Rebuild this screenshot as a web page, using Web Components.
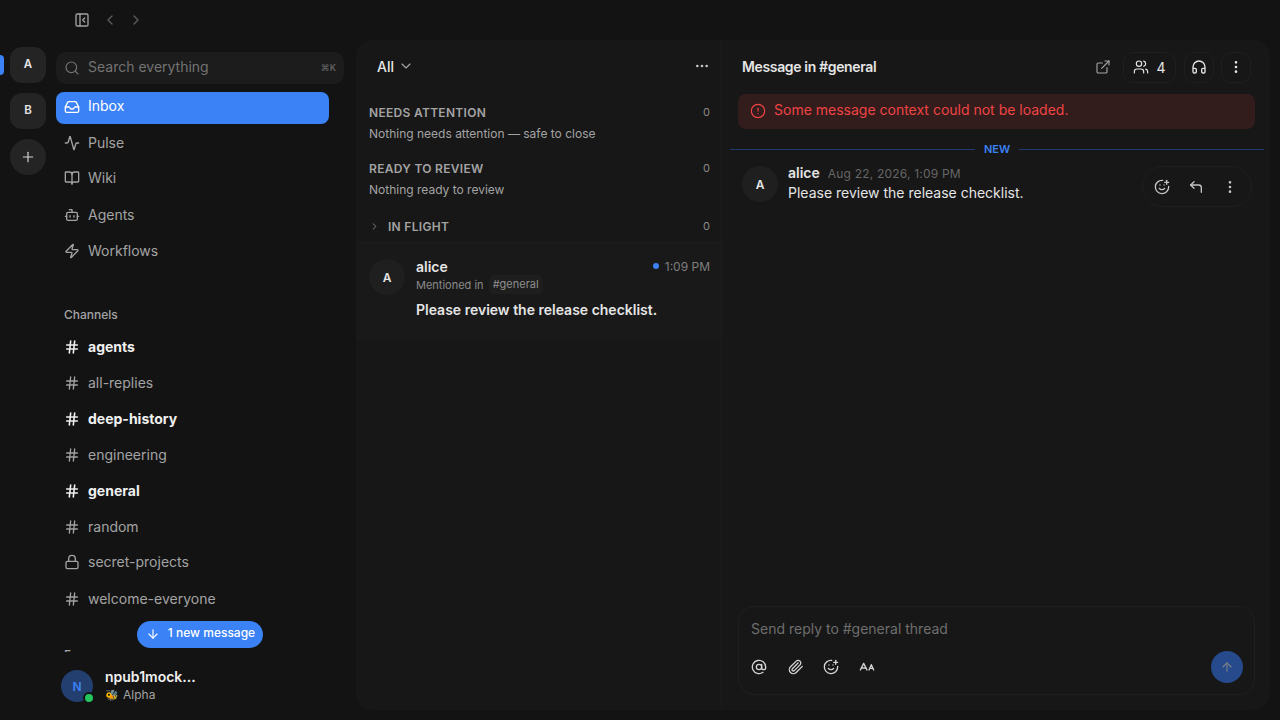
<!DOCTYPE html>
<html lang="en">
<head>
<meta charset="utf-8">
<title>Inbox</title>
<style>
  html, body { margin: 0; height: 100%; background: #131313; overflow: hidden; }
  body { font-family: Inter, "Noto Sans", sans-serif; color: #e5e5e5; }
</style>
</head>
<body>
<app-shell></app-shell>
<script>
const ICONS = {
  panel: '<rect x="3" y="3" width="18" height="18" rx="2"/><path d="M9 3v18"/><path d="m16 15-3-3 3-3"/>',
  left: '<path d="m15 18-6-6 6-6"/>',
  right: '<path d="m9 18 6-6-6-6"/>',
  down: '<path d="m6 9 6 6 6-6"/>',
  search: '<circle cx="11" cy="11" r="8"/><path d="m21 21-4.3-4.3"/>',
  inbox: '<path d="M22 12h-6l-2 3h-4l-2-3H2"/><path d="M5.45 5.11 2 12v6a2 2 0 0 0 2 2h16a2 2 0 0 0 2-2v-6l-3.45-6.89A2 2 0 0 0 16.76 4H7.24a2 2 0 0 0-1.79 1.11z"/>',
  pulse: '<path d="M22 12h-2.48a2 2 0 0 0-1.93 1.46l-2.35 8.36a.25.25 0 0 1-.48 0L9.24 2.18a.25.25 0 0 0-.48 0l-2.35 8.36A2 2 0 0 1 4.49 12H2"/>',
  book: '<path d="M12 7v14"/><path d="M3 18a1 1 0 0 1-1-1V4a1 1 0 0 1 1-1h5a4 4 0 0 1 4 4 4 4 0 0 1 4-4h5a1 1 0 0 1 1 1v13a1 1 0 0 1-1 1h-6a3 3 0 0 0-3 3 3 3 0 0 0-3-3z"/>',
  bot: '<path d="M12 8V4H8"/><rect x="4" y="8" width="16" height="12" rx="2"/><path d="M2 14h2"/><path d="M20 14h2"/><path d="M15 13v2"/><path d="M9 13v2"/>',
  zap: '<path d="M4 14a1 1 0 0 1-.78-1.63l9.9-10.2a.5.5 0 0 1 .86.46l-1.92 6.02A1 1 0 0 0 13 10h7a1 1 0 0 1 .78 1.63l-9.9 10.2a.5.5 0 0 1-.86-.46l1.92-6.02A1 1 0 0 0 11 14z"/>',
  hash: '<path d="M4 9h16"/><path d="M4 15h16"/><path d="M10 3 8 21"/><path d="M16 3l-2 18"/>',
  lock: '<rect x="3" y="11" width="18" height="11" rx="2"/><path d="M7 11V7a5 5 0 0 1 10 0v4"/>',
  plus: '<path d="M5 12h14"/><path d="M12 5v14"/>',
  arrowdown: '<path d="M12 5v14"/><path d="m19 12-7 7-7-7"/>',
  arrowup: '<path d="m5 12 7-7 7 7"/><path d="M12 19V5"/>',
  external: '<path d="M15 3h6v6"/><path d="M10 14 21 3"/><path d="M18 13v6a2 2 0 0 1-2 2H5a2 2 0 0 1-2-2V8a2 2 0 0 1 2-2h6"/>',
  users: '<path d="M16 21v-2a4 4 0 0 0-4-4H6a4 4 0 0 0-4 4v2"/><circle cx="9" cy="7" r="4"/><path d="M22 21v-2a4 4 0 0 0-3-3.87"/><path d="M16 3.13a4 4 0 0 1 0 7.75"/>',
  headphones: '<path d="M3 14h3a2 2 0 0 1 2 2v3a2 2 0 0 1-2 2H5a2 2 0 0 1-2-2v-7a9 9 0 0 1 18 0v7a2 2 0 0 1-2 2h-1a2 2 0 0 1-2-2v-3a2 2 0 0 1 2-2h3"/>',
  vdots: '<circle cx="12" cy="12" r="1"/><circle cx="12" cy="5" r="1"/><circle cx="12" cy="19" r="1"/>',
  hdots: '<circle cx="12" cy="12" r="1"/><circle cx="19" cy="12" r="1"/><circle cx="5" cy="12" r="1"/>',
  alert: '<circle cx="12" cy="12" r="10"/><path d="M12 8v4"/><path d="M12 16h.01"/>',
  smile: '<path d="M22 11v1a10 10 0 1 1-9-10"/><path d="M8 14s1.5 2 4 2 4-2 4-2"/><path d="M9 9h.01"/><path d="M15 9h.01"/><path d="M16 5h6"/><path d="M19 2v6"/>',
  reply: '<path d="M9 14 4 9l5-5"/><path d="M20 20v-7a4 4 0 0 0-4-4H4"/>',
  at: '<circle cx="12" cy="12" r="4"/><path d="M16 8v5a3 3 0 0 0 6 0v-1a10 10 0 1 0-4 8"/>',
  clip: '<path d="m21.44 11.05-9.19 9.19a6 6 0 0 1-8.49-8.49l8.57-8.57A4 4 0 1 1 18 8.84l-8.59 8.57a2 2 0 0 1-2.83-2.83l8.49-8.48"/>',
  size: '<path d="M2 16.5 7 6.5l5 10"/><path d="M3.8 13.5h6.4"/><path d="M15 16.5l3.5-8 3.5 8"/><path d="M16.2 14h4.6"/>'
};

class UiIcon extends HTMLElement {
  connectedCallback() {
    const size = this.getAttribute('size') || 16;
    const sw = this.getAttribute('stroke') || 2;
    this.attachShadow({ mode: 'open' });
    this.shadowRoot.innerHTML = `
      <style>:host { display: inline-flex; flex: none; width: ${size}px; height: ${size}px; } svg { display: block; }</style>
      <svg width="${size}" height="${size}" viewBox="0 0 24 24" fill="none" stroke="currentColor" stroke-width="${sw}" stroke-linecap="round" stroke-linejoin="round">${ICONS[this.getAttribute('name')] || ''}</svg>`;
  }
}

class TopBar extends HTMLElement {
  connectedCallback() {
    this.attachShadow({ mode: 'open' });
    this.shadowRoot.innerHTML = `
      <style>
        :host { display: flex; align-items: center; height: 40px; padding-left: 74px; gap: 10px; color: #5c5c5c; }
        .panel { color: #a3a3a3; margin-right: 2px; }
      </style>
      <ui-icon class="panel" name="panel" size="16"></ui-icon>
      <ui-icon name="left" size="16"></ui-icon>
      <ui-icon name="right" size="16"></ui-icon>`;
  }
}

class ServerRail extends HTMLElement {
  connectedCallback() {
    this.attachShadow({ mode: 'open' });
    this.shadowRoot.innerHTML = `
      <style>
        :host { display: flex; flex-direction: column; align-items: center; width: 56px; flex: none; padding-top: 7px; gap: 10px; position: relative; box-sizing: border-box; }
        .srv { width: 36px; height: 36px; padding-bottom: 2px; box-sizing: border-box; border-radius: 12px; background: #242424; display: flex; align-items: center; justify-content: center; font: 600 11.5px Inter, sans-serif; color: #e5e5e5; }
        .add { border-radius: 50%; color: #d4d4d4; padding-bottom: 0; }
        .mark { position: absolute; left: 0; top: 15px; width: 4px; height: 20px; background: #3b82f6; border-radius: 0 4px 4px 0; }
      </style>
      <span class="mark"></span>
      <div class="srv">A</div>
      <div class="srv">B</div>
      <div class="srv add"><ui-icon name="plus" size="16" stroke="1.75"></ui-icon></div>`;
  }
}

class NavItem extends HTMLElement {
  connectedCallback() {
    const icon = this.getAttribute('icon');
    this.attachShadow({ mode: 'open' });
    this.shadowRoot.innerHTML = `
      <style>
        :host { display: flex; align-items: center; height: 36px; gap: 8px; padding-left: 8px; margin-right: 15px; box-sizing: border-box; font-size: 14px; color: #a3a3a3; border-radius: 8px; }
        :host([active]) { height: 32px; background: #3b82f6; color: #fff; margin-bottom: 1px; padding-bottom: 3px; }
        :host([unread]) { color: #f0f0f0; font-weight: 700; }
        .t { margin-bottom: 2px; }
      </style>
      <ui-icon name="${icon}" size="16" stroke="${this.hasAttribute('unread') ? 2.4 : 2}"></ui-icon>
      <span class="t"><slot></slot></span>`;
  }
}

class SideBar extends HTMLElement {
  connectedCallback() {
    this.attachShadow({ mode: 'open' });
    this.shadowRoot.innerHTML = `
      <style>
        :host { display: flex; flex-direction: column; width: 288px; flex: none; position: relative; font-size: 14px; }
        .search { display: flex; align-items: center; gap: 8px; height: 32px; margin-top: 12px; padding: 0 8px; background: #1c1c1c; border-radius: 10px; color: #737373; flex: none; }
        .search span { flex: 1; margin-bottom: 3px; }
        .search kbd { font: 600 9px Inter, sans-serif; color: #5f5f5f; margin-bottom: 2px; }
        .scroll { flex: 1; overflow: hidden; padding-top: 8px; min-height: 0; }
        .head { font-size: 12px; font-weight: 500; color: #a3a3a3; padding-left: 8px; line-height: 15px; }
        .channels { margin-top: 38px; }
        .list { margin-top: 7px; }
        .pill { position: absolute; left: 81px; top: 581px; height: 27px; width: 126px; box-sizing: border-box; background: #3b82f6; color: #fff; border-radius: 14px; display: flex; align-items: center; justify-content: center; gap: 8px; padding: 0 0 1px 1px; font-size: 12px; font-weight: 500; }
        .pill span { margin-bottom: 3px; }
        .me { flex: none; height: 68px; display: flex; align-items: center; gap: 12px; padding-left: 5px; box-sizing: border-box; }
        .avatar { position: relative; width: 32px; height: 32px; border-radius: 50%; background: #233f70; color: #3b82f6; font-size: 12px; font-weight: 600; display: flex; align-items: center; justify-content: center; }
        .dot { position: absolute; right: -2px; bottom: -2px; width: 8px; height: 8px; background: #22c55e; border-radius: 50%; border: 2px solid #131313; }
        .name { font-size: 14px; font-weight: 600; color: #f0f0f0; line-height: 18px; }
        .status { font-size: 12px; color: #a3a3a3; line-height: 18px; display: flex; gap: 4px; }
        .status i { font-style: normal; font-size: 11px; }
      </style>
      <div class="search"><ui-icon name="search" size="16" stroke="1.75"></ui-icon><span>Search everything</span><kbd>⌘K</kbd></div>
      <div class="scroll">
        <nav-item icon="inbox" active>Inbox</nav-item>
        <nav-item icon="pulse">Pulse</nav-item>
        <nav-item icon="book" style="margin-top:-1px">Wiki</nav-item>
        <nav-item icon="bot" style="margin-top:1px">Agents</nav-item>
        <nav-item icon="zap">Workflows</nav-item>
        <div class="head channels">Channels</div>
        <div class="list">
          <nav-item icon="hash" unread>agents</nav-item>
          <nav-item icon="hash">all-replies</nav-item>
          <nav-item icon="hash" unread>deep-history</nav-item>
          <nav-item icon="hash">engineering</nav-item>
          <nav-item icon="hash" unread>general</nav-item>
          <nav-item icon="hash">random</nav-item>
          <nav-item icon="lock" style="margin-top:-1px">secret-projects</nav-item>
          <nav-item icon="hash" style="margin-top:1px">welcome-everyone</nav-item>
        </div>
        <div class="head" style="margin-top:30px">Forums</div>
      </div>
      <div class="pill"><ui-icon name="arrowdown" size="14"></ui-icon><span>1 new message</span></div>
      <div class="me">
        <div class="avatar">N<span class="dot"></span></div>
        <div>
          <div class="name">npub1mock...</div>
          <div class="status"><i>🐝</i>Alpha</div>
        </div>
      </div>`;
  }
}

class InboxSection extends HTMLElement {
  connectedCallback() {
    const chevron = this.hasAttribute('collapsed');
    this.attachShadow({ mode: 'open' });
    this.shadowRoot.innerHTML = `
      <style>
        :host { display: block; padding: 0 11px 0 13px; }
        .row { display: flex; align-items: center; height: 16px; gap: 8px; }
        .title { flex: 1; font-size: 12px; font-weight: 600; color: #a3a3a3; letter-spacing: .025em; }
        .count { font-size: 11px; color: #8a8a8a; }
        .empty { font-size: 12px; color: #a3a3a3; line-height: 16px; margin-top: 6px; }
        ui-icon { color: #8a8a8a; }
      </style>
      <div class="row">${chevron ? '<ui-icon name="right" size="11"></ui-icon>' : ''}<span class="title">${this.getAttribute('title')}</span><span class="count">0</span></div>
      ${chevron ? '' : `<div class="empty"><slot></slot></div>`}`;
  }
}

class InboxPanel extends HTMLElement {
  connectedCallback() {
    this.attachShadow({ mode: 'open' });
    this.shadowRoot.innerHTML = `
      <style>
        :host { display: flex; flex-direction: column; width: 366px; flex: none; border-right: 1px solid #1c1c1c; box-sizing: border-box; }
        header { display: flex; align-items: center; height: 52px; padding: 0 11px 0 21px; flex: none; color: #e5e5e5; font-size: 14px; font-weight: 500; gap: 4px; }
        header .more { margin-left: auto; color: #c4c4c4; }
        header ui-icon:first-of-type { color: #a3a3a3; }
        .sections { display: flex; flex-direction: column; padding-top: 12px; }
        .item { display: flex; gap: 11px; margin-top: 8px; padding: 16px 11px 0 13px; height: 98px; box-sizing: border-box; background: #191919; border-top: 1px solid #1c1c1c; }
        .av { width: 36px; height: 36px; border-radius: 50%; background: #1f1f1f; display: flex; align-items: center; justify-content: center; font-size: 12px; font-weight: 600; color: #e5e5e5; flex: none; }
        .body { flex: 1; min-width: 0; }
        .top { display: flex; align-items: center; height: 16px; margin-top: -1px; }
        .who { font-size: 14px; font-weight: 600; color: #e5e5e5; flex: 1; }
        .dot { width: 6px; height: 6px; border-radius: 50%; background: #3b82f6; margin-right: 6px; }
        .time { font-size: 12px; color: #7f7f7f; }
        .ctx { display: flex; align-items: center; font-size: 11px; color: #8a8a8a; margin-top: 1px; height: 19px; gap: 5px; }
        .tag { background: #1e1e1e; border-radius: 5px; padding: 2px 4px; line-height: 15px; color: #8f8f8f; }
        .msg { font-size: 14px; font-weight: 600; color: #e5e5e5; margin-top: 6px; line-height: 20px; }
      </style>
      <header><span>All</span><ui-icon name="down" size="16" stroke="1.75"></ui-icon><ui-icon class="more" name="hdots" size="16"></ui-icon></header>
      <div class="sections">
        <inbox-section title="NEEDS ATTENTION">Nothing needs attention — safe to close</inbox-section>
        <inbox-section title="READY TO REVIEW" style="margin-top:18px">Nothing ready to review</inbox-section>
        <inbox-section title="IN FLIGHT" collapsed style="margin-top:20px"></inbox-section>
      </div>
      <div class="item">
        <div class="av">A</div>
        <div class="body">
          <div class="top"><span class="who">alice</span><span class="dot"></span><span class="time">1:09 PM</span></div>
          <div class="ctx"><span>Mentioned in</span><span class="tag">#general</span></div>
          <div class="msg">Please review the release checklist.</div>
        </div>
      </div>`;
  }
}

class ThreadPanel extends HTMLElement {
  connectedCallback() {
    this.attachShadow({ mode: 'open' });
    this.shadowRoot.innerHTML = `
      <style>
        :host { display: flex; flex-direction: column; flex: 1; min-width: 0; }
        header { display: flex; align-items: center; height: 54px; padding: 0 19px 0 20px; flex: none; gap: 7.5px; box-sizing: border-box; }
        h1 { flex: 1; margin: 0 0 2px; font-size: 14px; font-weight: 600; letter-spacing: -.025em; color: #e5e5e5; }
        .btn { height: 31px; min-width: 30px; box-sizing: border-box; border: 1px solid #1f1f1f; border-radius: 10px; display: flex; align-items: center; justify-content: center; gap: 7px; color: #e5e5e5; font-size: 14px; font-weight: 400; }
        .people { width: 53px; }
        .plain { border-color: transparent; color: #a3a3a3; margin-right: -2.5px; }
        .error { display: flex; align-items: center; gap: 8px; height: 35px; margin: 0 15px 0 16px; padding: 0 12px 2px; box-sizing: border-box; background: #331c1c; border-radius: 8px; color: #ef4444; font-size: 14px; flex: none; }
        .error span { margin-bottom: 2px; }
        .new { display: flex; align-items: center; margin: 13px 6px 0 8px; gap: 9px; color: #3b82f6; font-size: 11px; font-weight: 600; height: 14px; }
        .new::before, .new::after { content: ""; flex: 1; height: 1px; background: #1e3a70; }
        .msg { display: flex; gap: 10px; margin-top: 10px; padding: 0 20px; position: relative; flex: none; }
        .av { width: 36px; height: 36px; border-radius: 50%; background: #1f1f1f; display: flex; align-items: center; justify-content: center; font-size: 12px; font-weight: 600; color: #e5e5e5; flex: none; }
        .meta { display: flex; align-items: baseline; gap: 8px; line-height: 18px; margin-top: -2px; }
        .who { font-size: 14px; font-weight: 600; color: #e5e5e5; }
        .when { font-size: 12px; letter-spacing: .2px; color: #666; }
        .txt { font-size: 14px; color: #e5e5e5; line-height: 20px; }
        .actions { position: absolute; right: 18px; top: 0; height: 41px; width: 110px; box-sizing: border-box; border: 1px solid #1f1f1f; border-radius: 21px; padding-right: 2px; display: flex; align-items: center; justify-content: center; gap: 18px; color: #c4c4c4; background: #171717; }
        .spacer { flex: 1; }
        .composer { margin: 0 15px 15px 16px; height: 89px; box-sizing: border-box; border: 1px solid #1f1f1f; border-radius: 16px; padding: 0 12px; display: flex; flex-direction: column; flex: none; }
        .ph { font-size: 14px; color: #6e6e6e; height: 42px; display: flex; align-items: center; }
        .tools { display: flex; align-items: center; gap: 20px; color: #d4d4d4; height: 32px; margin-top: 2px; }
        .send { margin-left: auto; width: 32px; height: 32px; border-radius: 50%; background: #264a8c; color: #7a7f88; display: flex; align-items: center; justify-content: center; margin-right: -1px; }
      </style>
      <header>
        <h1>Message in #general</h1>
        <div class="btn plain"><ui-icon name="external" size="16" stroke="1.75"></ui-icon></div>
        <div class="btn people"><ui-icon name="users" size="16" stroke="1.75"></ui-icon>4</div>
        <div class="btn"><ui-icon name="headphones" size="16"></ui-icon></div>
        <div class="btn"><ui-icon name="vdots" size="16"></ui-icon></div>
      </header>
      <div class="error"><ui-icon name="alert" size="16" stroke="1.75"></ui-icon><span>Some message context could not be loaded.</span></div>
      <div class="new">NEW</div>
      <div class="msg">
        <div class="av">A</div>
        <div>
          <div class="meta"><span class="who">alice</span><span class="when">Aug 22, 2026, 1:09 PM</span></div>
          <div class="txt">Please review the release checklist.</div>
        </div>
        <div class="actions"><ui-icon name="smile" size="16"></ui-icon><ui-icon name="reply" size="16"></ui-icon><ui-icon name="vdots" size="16"></ui-icon></div>
      </div>
      <div class="spacer"></div>
      <div class="composer">
        <div class="ph">Send reply to #general thread</div>
        <div class="tools">
          <ui-icon name="at" size="16"></ui-icon>
          <ui-icon name="clip" size="16" style="margin-left:1px"></ui-icon>
          <ui-icon name="smile" size="16" style="margin-left:-1px"></ui-icon>
          <ui-icon name="size" size="16"></ui-icon>
          <div class="send"><ui-icon name="arrowup" size="14"></ui-icon></div>
        </div>
      </div>`;
  }
}

class AppShell extends HTMLElement {
  connectedCallback() {
    this.attachShadow({ mode: 'open' });
    this.shadowRoot.innerHTML = `
      <style>
        :host { display: flex; flex-direction: column; width: 1280px; height: 720px; }
        .cols { display: flex; flex: 1; min-height: 0; }
        .main { display: flex; flex: 1; min-width: 0; margin: 0 10px 10px 12px; background: #171717; border-radius: 16px; overflow: hidden; }
      </style>
      <top-bar></top-bar>
      <div class="cols">
        <server-rail></server-rail>
        <side-bar></side-bar>
        <div class="main"><inbox-panel></inbox-panel><thread-panel></thread-panel></div>
      </div>`;
  }
}

customElements.define('ui-icon', UiIcon);
customElements.define('top-bar', TopBar);
customElements.define('server-rail', ServerRail);
customElements.define('nav-item', NavItem);
customElements.define('side-bar', SideBar);
customElements.define('inbox-section', InboxSection);
customElements.define('inbox-panel', InboxPanel);
customElements.define('thread-panel', ThreadPanel);
customElements.define('app-shell', AppShell);
</script>
</body>
</html>
